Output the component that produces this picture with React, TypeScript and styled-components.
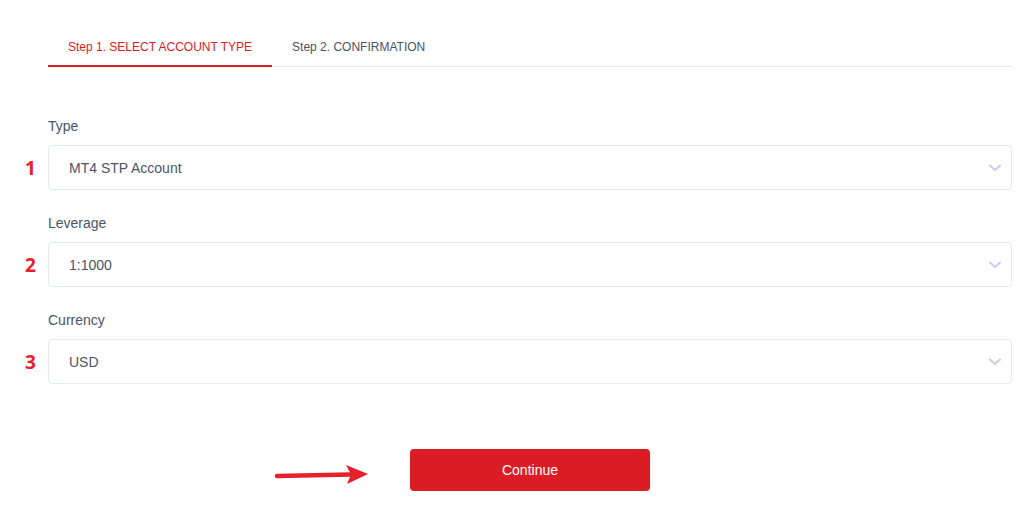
import styled, { createGlobalStyle } from "styled-components";

const GlobalStyle = createGlobalStyle`
  html, body {
    margin: 0;
    padding: 0;
    background: #ffffff;
    font-family: "Liberation Sans", Arial, sans-serif;
  }
`;

const Page = styled.div`
  width: 1025px;
  height: 505px;
  box-sizing: border-box;
  padding: 28px 13px 0 0;
`;

const Tabs = styled.div`
  display: flex;
  margin-left: 48px;
  border-bottom: 1px solid #e9ebf0;
`;

const Tab = styled.div<{ $active?: boolean }>`
  padding: 12px 20px 11px;
  font-size: 12px;
  line-height: 14px;
  color: ${(p) => (p.$active ? "#dc1c24" : "#4a5363")};
  border-bottom: 2px solid ${(p) => (p.$active ? "#dc1c24" : "transparent")};
  margin-bottom: -1px;
`;

const Form = styled.div`
  display: flex;
  flex-direction: column;
  margin-top: 49px;
  gap: 23px;
`;

const Field = styled.div`
  display: grid;
  grid-template-columns: 48px 1fr;
  row-gap: 9px;
  align-items: center;
`;

const Label = styled.div`
  grid-column: 2;
  font-size: 14px;
  line-height: 20px;
  color: #4a5568;
`;

const StepNumber = styled.div`
  grid-column: 1;
  padding-left: 25px;
  font-family: "Open Sans", "Liberation Sans", sans-serif;
  font-weight: 700;
  font-size: 19px;
  color: #e8202a;
`;

const Select = styled.div`
  grid-column: 2;
  height: 45px;
  box-sizing: border-box;
  border: 1px solid #e6e9ef;
  border-radius: 4px;
  display: flex;
  align-items: center;
  justify-content: space-between;
  padding: 0 10px 0 20px;
  font-size: 14px;
  color: #4a5568;
`;

const Footer = styled.div`
  position: relative;
  margin: 65px 0 0 48px;
  display: flex;
  justify-content: center;
`;

const ContinueButton = styled.button`
  width: 240px;
  height: 42px;
  border: none;
  border-radius: 4px;
  background: #dc1c24;
  color: #ffffff;
  font-family: "Liberation Sans", Arial, sans-serif;
  font-size: 14px;
  cursor: pointer;
`;

const Pointer = styled.svg`
  position: absolute;
  left: 227px;
  top: 8px;
`;

const Chevron = () => (
  <svg width="12" height="8" viewBox="0 0 12 8">
    <path d="M1 1.5 L6 6 L11 1.5" fill="none" stroke="#d6c3ee" strokeWidth="2" strokeLinecap="round" />
  </svg>
);

const fields = [
  { n: "1", label: "Type", value: "MT4 STP Account" },
  { n: "2", label: "Leverage", value: "1:1000" },
  { n: "3", label: "Currency", value: "USD" },
];

export default function App() {
  return (
    <>
      <GlobalStyle />
      <Page>
        <Tabs>
          <Tab $active>Step 1. SELECT ACCOUNT TYPE</Tab>
          <Tab>Step 2. CONFIRMATION</Tab>
        </Tabs>
        <Form>
          {fields.map((f) => (
            <Field key={f.n}>
              <Label>{f.label}</Label>
              <StepNumber>{f.n}</StepNumber>
              <Select>
                <span>{f.value}</span>
                <Chevron />
              </Select>
            </Field>
          ))}
        </Form>
        <Footer>
          <Pointer width="96" height="28" viewBox="0 0 96 28">
            <path d="M2 19 L75 17.5" stroke="#e8202a" strokeWidth="4.5" strokeLinecap="round" />
            <path d="M71 8 L93 17 L72 27 L76 17.5 Z" fill="#e8202a" />
          </Pointer>
          <ContinueButton>Continue</ContinueButton>
        </Footer>
      </Page>
    </>
  );
}
